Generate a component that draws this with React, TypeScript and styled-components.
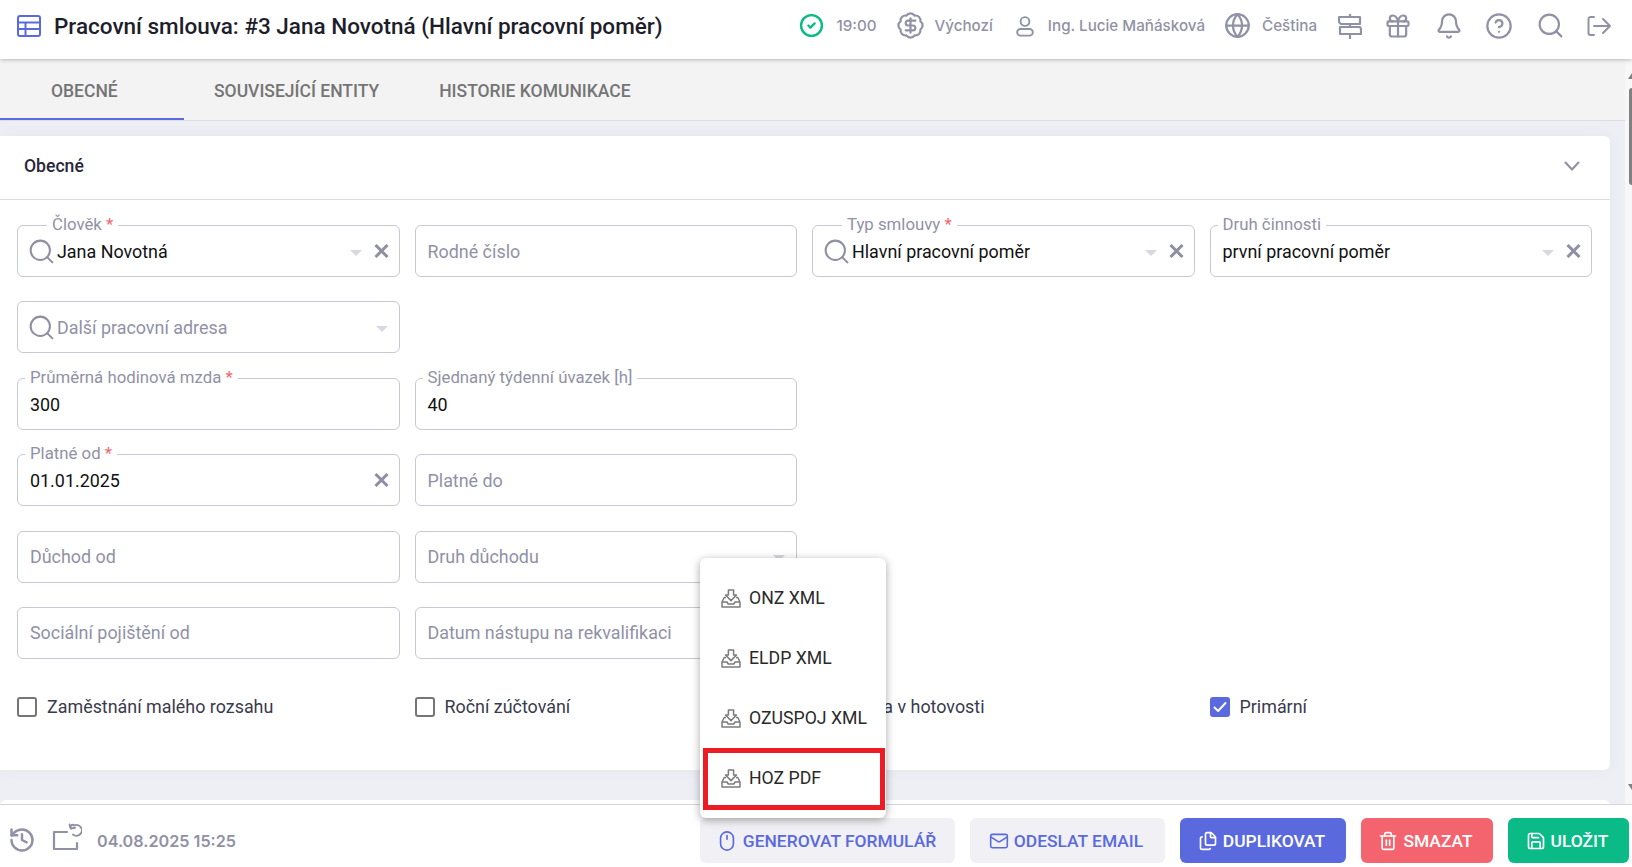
import { FC, ReactNode } from 'react';
import styled, { createGlobalStyle } from 'styled-components';
import {
  BadgeDollarSign,
  Bell,
  CircleCheck,
  CircleHelp,
  Files,
  Gift,
  Globe,
  History,
  Mail,
  Mouse,
  Save,
  Search,
  Trash2,
} from 'lucide-react';

const GlobalStyle = createGlobalStyle`
  html, body {
    margin: 0;
    padding: 0;
    background: #fff;
    font-family: Roboto, "Liberation Sans", sans-serif;
  }
  * {
    box-sizing: border-box;
  }
`;

const COLORS = {
  primary: '#5a6ade',
  muted: '#9191a6',
  border: '#c8c8d6',
  dark: '#27273a',
};

// drawn icons
const TableIcon = () => (
  <svg width="24" height="22" viewBox="0 0 24 22" fill="none" stroke={COLORS.primary} strokeWidth="2">
    <rect x="1" y="1" width="22" height="20" rx="2" />
    <path d="M1 7.500h22M1 14h22M8.500 7.500V21" />
  </svg>
);

const PersonIcon = () => (
  <svg width="18" height="22" viewBox="0 0 18 22" fill="none" stroke={COLORS.muted} strokeWidth="1.9">
    <circle cx="9" cy="6.500" r="4.400" />
    <rect x="1.200" y="14" width="15.600" height="6.600" rx="3.200" />
  </svg>
);

const SignpostIcon = () => (
  <svg width="24" height="26" viewBox="0 0 24 26" fill="none" stroke={COLORS.muted} strokeWidth="2.200" strokeLinejoin="round">
    <path d="M12 1v3M12 11v3M12 21v5" />
    <path d="M1 4h21v7H3L1 9z" />
    <path d="M2 14h20l1 2v5H2z" />
  </svg>
);

const LogoutIcon = () => (
  <svg width="24" height="22" viewBox="0 0 24 22" fill="none" stroke={COLORS.muted} strokeWidth="2" strokeLinecap="round" strokeLinejoin="round">
    <path d="M7 2H3.500A2 2 0 0 0 1.500 4v14a2 2 0 0 0 2 2H7" />
    <path d="M7 11h16M16 4l7 7-7 7" />
  </svg>
);

const RestoreBoxIcon = () => (
  <svg width="30" height="28" viewBox="0 0 30 28" fill="none" stroke={COLORS.muted} strokeWidth="2.200" strokeLinecap="round" strokeLinejoin="round">
    <path d="M15 9H2v17h23v-6" />
    <path d="M19 5.500a1 1 0 0 1 3-3 5.400 5.400 0 1 1-1 9" strokeWidth="1.900" />
    <path d="M17.500 1.500l1.500 4 4-.8" strokeWidth="1.900" />
  </svg>
);

const TrayDownloadIcon = () => (
  <svg width="20" height="19" viewBox="0 0 20 19" fill="none" stroke="#7c7c7c" strokeWidth="1.500" strokeLinejoin="round">
    <path d="M7.400 1h5.200v5h2.900L10 11.600 4.500 6h2.900z" />
    <path d="M5 8.500H3.200L1 13v5h18v-5l-2.200-4.500H15" />
    <path d="M1 13h5l1.200 2h5.600L14 13h5" />
  </svg>
);

const CheckMark = () => (
  <svg width="14" height="12" viewBox="0 0 14 12" fill="none" stroke="#fff" strokeWidth="1.900" strokeLinecap="round" strokeLinejoin="round">
    <path d="M1.500 6.500l3.600 3.500 7.400-8" />
  </svg>
);

const ClearIcon = () => (
  <svg width="15" height="14" viewBox="0 0 15 14" fill="none" stroke="#8f8fa3" strokeWidth="3">
    <path d="M1.500 1l12 12M13.500 1l-12 12" />
  </svg>
);

const ChevronIcon = () => (
  <svg width="16" height="10" viewBox="0 0 16 10" fill="none" stroke="#8f8fa3" strokeWidth="2">
    <path d="M1 1l7 7.500L15 1" />
  </svg>
);

type FieldProps = {
  label: string;
  value?: string;
  required?: boolean;
  search?: boolean;
  select?: boolean;
  clear?: boolean;
  newRow?: boolean;
};

const Field: FC<FieldProps> = ({ label, value, required, search, select, clear, newRow }) => (
  <FieldBox $newRow={newRow}>
    {value && (
      <FloatingLabel $shift={search}>
        {label}
        {required && <Required> *</Required>}
      </FloatingLabel>
    )}
    {search && <FieldSearch size={29} color="#8f8fa3" strokeWidth={1.7} />}
    <FieldText $empty={!value} $shift={search}>
      {value || label}
    </FieldText>
    {select && <SelectArrow $near={clear} />}
    {clear && <ClearIcon />}
  </FieldBox>
);

const ActionButton: FC<{ variant: 'soft' | 'primary' | 'danger' | 'success'; icon: ReactNode; text: string; width: number }> = ({
  variant,
  icon,
  text,
  width,
}) => (
  <Button $variant={variant} $width={width}>
    {icon}
    {text}
  </Button>
);

const menuItems = ['ONZ XML', 'ELDP XML', 'OZUSPOJ XML', 'HOZ PDF'];

const App: FC = () => (
  <Page>
    <GlobalStyle />
    <Header>
      <TitleGroup>
        <TableIcon />
        <Title>Pracovní smlouva: #3 Jana Novotná (Hlavní pracovní poměr)</Title>
      </TitleGroup>
      <Meta $gap={12} $after={19}>
        <CircleCheck size={25} color="#0abb87" strokeWidth={2.3} />
        19:00
      </Meta>
      <Meta $gap={10} $after={23}>
        <BadgeDollarSign size={29} color={COLORS.muted} strokeWidth={1.8} />
        Výchozí
      </Meta>
      <Meta $gap={14} $after={19}>
        <PersonIcon />
        Ing. Lucie Maňásková
      </Meta>
      <Meta $gap={11} $after={21}>
        <Globe size={27} color={COLORS.muted} strokeWidth={2} />
        Čeština
      </Meta>
      <HeaderIcons>
        <SignpostIcon />
        <Gift size={28} color={COLORS.muted} strokeWidth={1.9} />
        <Bell size={28} color={COLORS.muted} strokeWidth={1.9} />
        <CircleHelp size={28} color={COLORS.muted} strokeWidth={1.9} />
        <Search size={29} color={COLORS.muted} strokeWidth={1.8} />
        <LogoutIcon />
      </HeaderIcons>
    </Header>

    <Body>
      <Main>
        <Tabs>
          <Tab $active>Obecné</Tab>
          <Tab>Související entity</Tab>
          <Tab>Historie komunikace</Tab>
        </Tabs>
        <Content>
          <Card>
            <CardHeader>
              Obecné
              <ChevronIcon />
            </CardHeader>
            <FormGrid>
              <Field label="Člověk" value="Jana Novotná" required search select clear />
              <Field label="Rodné číslo" />
              <Field label="Typ smlouvy" value="Hlavní pracovní poměr" required search select clear />
              <Field label="Druh činnosti" value="první pracovní poměr" select clear />
              <Field label="Další pracovní adresa" search select newRow />
              <Field label="Průměrná hodinová mzda" value="300" required newRow />
              <Field label="Sjednaný týdenní úvazek [h]" value="40" />
              <Field label="Platné od" value="01.01.2025" required clear newRow />
              <Field label="Platné do" />
              <Field label="Důchod od" newRow />
              <Field label="Druh důchodu" select />
              <Field label="Sociální pojištění od" newRow />
              <Field label="Datum nástupu na rekvalifikaci" />
              <CheckRow>
                <CheckItem>
                  <CheckBox />
                  Zaměstnání malého rozsahu
                </CheckItem>
                <CheckItem>
                  <CheckBox />
                  Roční zúčtování
                </CheckItem>
                <CheckItem>
                  <CheckBox />
                  Platba v hotovosti
                </CheckItem>
                <CheckItem>
                  <CheckBox $checked>
                    <CheckMark />
                  </CheckBox>
                  Primární
                </CheckItem>
              </CheckRow>
            </FormGrid>
          </Card>
          <NextCard />
        </Content>
      </Main>
      <ScrollTrack>
        <ScrollArrow />
        <ScrollThumb />
        <ScrollArrow $down />
      </ScrollTrack>
    </Body>

    <Footer>
      <FooterHistory size={28} color={COLORS.muted} strokeWidth={2.1} />
      <FooterBoxIcon>
        <RestoreBoxIcon />
      </FooterBoxIcon>
      <Saved>04.08.2025 15:25</Saved>
      <FooterActions>
        <MenuAnchor>
          <ActionButton variant="soft" width={255} icon={<Mouse size={22} strokeWidth={1.8} />} text="Generovat formulář" />
          <Menu>
            {menuItems.map((item) => (
              <MenuItem key={item} $marked={item === 'HOZ PDF'}>
                <TrayDownloadIcon />
                {item}
              </MenuItem>
            ))}
          </Menu>
        </MenuAnchor>
        <ActionButton variant="soft" width={195} icon={<Mail size={20} strokeWidth={1.9} />} text="Odeslat email" />
        <ActionButton variant="primary" width={166} icon={<Files size={20} strokeWidth={2} />} text="Duplikovat" />
        <ActionButton variant="danger" width={132} icon={<Trash2 size={20} strokeWidth={2} />} text="Smazat" />
        <ActionButton variant="success" width={121} icon={<Save size={20} strokeWidth={2} />} text="Uložit" />
      </FooterActions>
    </Footer>
  </Page>
);

// styles
const Page = styled.div`
  width: 1632px;
  height: 867px;
  display: flex;
  flex-direction: column;
  overflow: hidden;
  background: #fff;
`;

const Header = styled.header`
  height: 59px;
  flex: none;
  display: flex;
  align-items: center;
  padding: 0 21px 8px 17px;
  background: #fff;
  box-shadow: 0 1px 4px rgba(0, 0, 0, 0.25);
  position: relative;
  z-index: 2;
`;

const TitleGroup = styled.div`
  display: flex;
  align-items: center;
  gap: 13px;
  margin-right: auto;
`;

const Title = styled.h1`
  margin: 0;
  font-size: 22.5px;
  font-weight: 500;
  color: #1d1d2b;
`;

const Meta = styled.div<{ $gap: number; $after: number }>`
  display: flex;
  align-items: center;
  gap: ${({ $gap }) => $gap}px;
  margin-right: ${({ $after }) => $after}px;
  font-family: Inter, Roboto, sans-serif;
  font-size: 15.2px;
  font-weight: 500;
  color: ${COLORS.muted};
`;

const HeaderIcons = styled.div`
  display: flex;
  align-items: center;
  gap: 22.4px;
`;

const Body = styled.div`
  flex: 1;
  min-height: 0;
  display: flex;
`;

const Main = styled.main`
  flex: 1;
  min-width: 0;
  display: flex;
  flex-direction: column;
  background: #eeeff5;
`;

const Tabs = styled.nav`
  height: 62px;
  flex: none;
  display: flex;
  background: #f3f3f4;
  border-bottom: 1px solid #dcdce2;
`;

const Tab = styled.div<{ $active?: boolean }>`
  height: 61px;
  width: ${({ $active }) => ($active ? '184px' : 'auto')};
  padding: 5px 30px 0 ${({ $active }) => ($active ? '51px' : '30px')};
  display: flex;
  align-items: center;
  font-size: 17.5px;
  font-weight: 500;
  text-transform: uppercase;
  color: #757575;
  border-bottom: 2px solid ${({ $active }) => ($active ? COLORS.primary : 'transparent')};
`;

const Content = styled.div`
  padding: 15px 15px 0 0;
`;

const Card = styled.section`
  height: 634px;
  background: #fff;
  border-radius: 0 6px 6px 0;
  box-shadow: 0 0 14px rgba(80, 80, 120, 0.05);
`;

const NextCard = styled.div`
  height: 20px;
  margin-top: 30px;
  background: #fff;
  border-radius: 6px 6px 0 0;
`;

const CardHeader = styled.div`
  height: 64px;
  padding: 0 30px 4px 24px;
  display: flex;
  align-items: center;
  justify-content: space-between;
  font-size: 17.6px;
  font-weight: 500;
  color: ${COLORS.dark};
  border-bottom: 1px solid #dcdce2;
`;

const FormGrid = styled.div`
  display: grid;
  grid-template-columns: repeat(4, 382.5px);
  grid-auto-rows: 52px;
  column-gap: 15px;
  row-gap: 24.4px;
  padding: 25px 17px 0;
`;

const FieldBox = styled.div<{ $newRow?: boolean }>`
  position: relative;
  display: flex;
  align-items: center;
  padding: 0 10px 0 12px;
  border: 1px solid ${COLORS.border};
  border-radius: 6px;
  grid-column-start: ${({ $newRow }) => ($newRow ? 1 : 'auto')};
`;

const FieldSearch = styled(Search)`
  flex: none;
  margin-left: -3px;
`;

const FloatingLabel = styled.span<{ $shift?: boolean }>`
  position: absolute;
  top: -12px;
  left: ${({ $shift }) => ($shift ? '29px' : '7px')};
  padding: 0 5px;
  background: #fff;
  font-size: 16.8px;
  line-height: 20px;
  color: ${COLORS.muted};
  white-space: nowrap;
`;

const Required = styled.span`
  color: #f4646e;
`;

const FieldText = styled.span<{ $empty?: boolean; $shift?: boolean }>`
  flex: 1;
  margin-left: ${({ $shift }) => ($shift ? '1px' : '0')};
  padding-top: ${({ $empty }) => ($empty ? '0' : '1px')};
  font-size: 17.9px;
  color: ${({ $empty }) => ($empty ? COLORS.muted : '#111')};
  white-space: nowrap;
`;

const SelectArrow = styled.i<{ $near?: boolean }>`
  width: 0;
  height: 0;
  margin: 3px ${({ $near }) => ($near ? '12px' : '1px')} 0 0;
  border-left: 6px solid transparent;
  border-right: 6px solid transparent;
  border-top: 6px solid #d8d8e0;
`;

const CheckRow = styled.div`
  grid-column: 1 / -1;
  display: grid;
  grid-template-columns: repeat(4, 382.5px);
  column-gap: 15px;
  margin-top: 13px;
  align-self: start;
`;

const CheckItem = styled.label`
  display: flex;
  align-items: center;
  gap: 10px;
  font-size: 17.9px;
  color: #3a3a4d;
`;

const CheckBox = styled.span<{ $checked?: boolean }>`
  width: 20px;
  height: 20px;
  display: flex;
  align-items: center;
  justify-content: center;
  border-radius: 3px;
  border: ${({ $checked }) => ($checked ? 'none' : '2px solid #757575')};
  background: ${({ $checked }) => ($checked ? COLORS.primary : '#fff')};
`;

const ScrollTrack = styled.div`
  width: 7px;
  flex: none;
  display: flex;
  flex-direction: column;
  padding-top: 14px;
  padding-bottom: 14px;
  background: #f7f7f8;
`;

const ScrollArrow = styled.i<{ $down?: boolean }>`
  width: 0;
  height: 0;
  margin-left: 3px;
  border-left: 4px solid transparent;
  border-right: 4px solid transparent;
  ${({ $down }) => ($down ? 'margin-top: auto; border-top: 6px solid #808080;' : 'border-bottom: 6px solid #808080;')}
`;

const ScrollThumb = styled.div`
  width: 4px;
  height: 97px;
  margin: 9px 0 0 4px;
  background: #808080;
  border-radius: 3px 0 0 3px;
`;

const Footer = styled.footer`
  height: 63px;
  flex: none;
  display: flex;
  align-items: flex-start;
  padding: 13px 3px 0 8px;
  background: #fff;
  border-top: 1px solid #d6d6dc;
  position: relative;
  z-index: 3;
`;

const FooterHistory = styled(History)`
  margin-top: 8px;
`;

const FooterBoxIcon = styled.div`
  margin: 5px 0 0 16px;
  height: 28px;
`;

const Saved = styled.div`
  margin: 13px 0 0 15px;
  font-family: Inter, Roboto, sans-serif;
  font-size: 16.2px;
  font-weight: 600;
  color: ${COLORS.muted};
`;

const FooterActions = styled.div`
  margin-left: auto;
  display: flex;
  gap: 15px;
`;

const MenuAnchor = styled.div`
  position: relative;
`;

const BUTTON_COLORS = {
  soft: { bg: '#f1f1f5', fg: COLORS.primary },
  primary: { bg: COLORS.primary, fg: '#fff' },
  danger: { bg: '#f4646e', fg: '#fff' },
  success: { bg: '#0abb87', fg: '#fff' },
};

const Button = styled.button<{ $variant: keyof typeof BUTTON_COLORS; $width: number }>`
  width: ${({ $width }) => $width}px;
  height: 45px;
  display: flex;
  align-items: center;
  justify-content: center;
  gap: 5px;
  padding: 0 3px 0 0;
  border: none;
  border-radius: 6px;
  font-family: Roboto, sans-serif;
  font-size: 17.4px;
  font-weight: 500;
  text-transform: uppercase;
  background: ${({ $variant }) => BUTTON_COLORS[$variant].bg};
  color: ${({ $variant }) => BUTTON_COLORS[$variant].fg};
`;

const Menu = styled.div`
  position: absolute;
  left: 0;
  bottom: 100%;
  width: 186px;
  padding: 9px 0 11px;
  background: #fff;
  border-radius: 6px;
  box-shadow: 0 2px 8px rgba(0, 0, 0, 0.35);
`;

const MenuItem = styled.div<{ $marked?: boolean }>`
  position: relative;
  height: 60px;
  display: flex;
  align-items: center;
  gap: 8px;
  padding: 2px 0 0 21px;
  font-size: 17.7px;
  color: #2a2a2a;
  ${({ $marked }) =>
    $marked &&
    `
    &::after {
      content: '';
      box-sizing: border-box;
      position: absolute;
      top: 1px;
      left: 3px;
      right: 1px;
      height: 62px;
      border: 5px solid #ed1c24;
    }
  `}
`;

export default App;
